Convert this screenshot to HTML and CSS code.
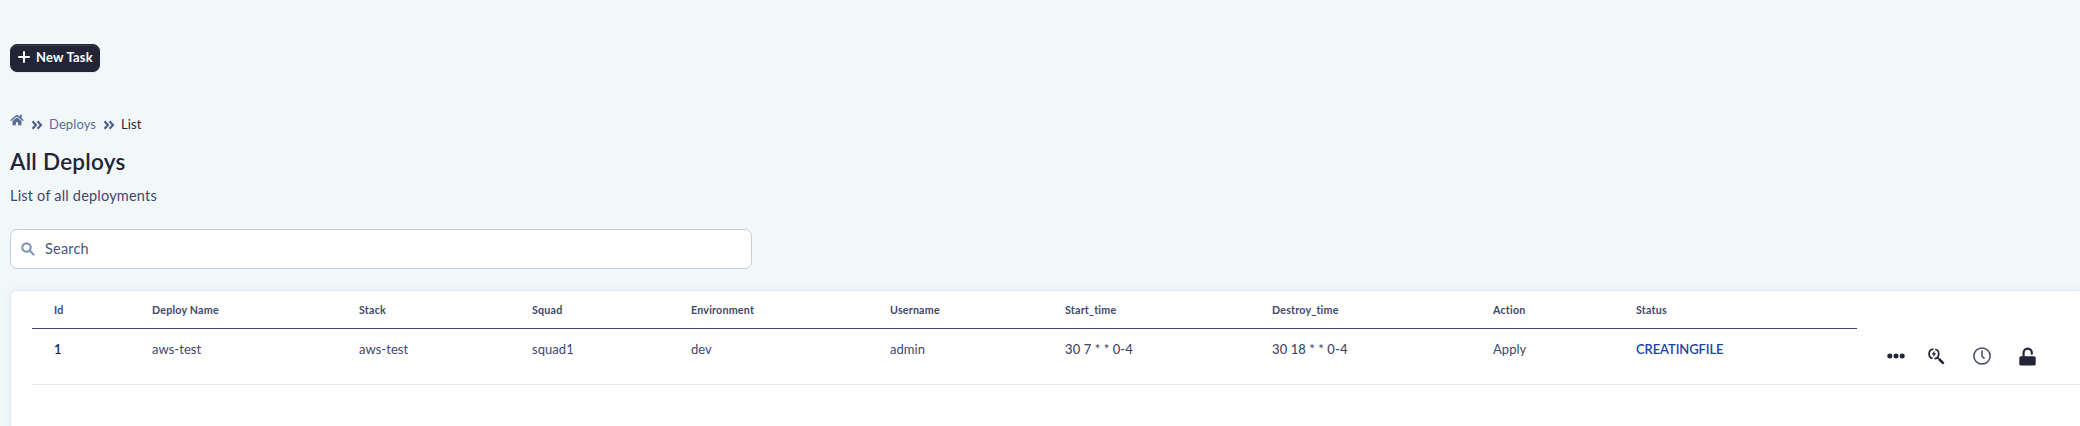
FILE: index.html
```html
<!DOCTYPE html>
<html lang="en">
<head>
<meta charset="utf-8">
<title>All Deploys</title>
<link rel="stylesheet" href="styles.css">
</head>
<body>
<main class="page">
  <button class="btn-new" type="button">
    <svg class="plus" viewBox="0 0 12 12"><path d="M6 1v10M1 6h10"/></svg>
    <span class="btn-label">New Task</span>
  </button>
  <nav class="crumbs">
    <svg class="home" viewBox="0 0 576 512"><path d="M280 148 96 300v164a16 16 0 0 0 16 16h112a16 16 0 0 0 16-16v-96a16 16 0 0 1 16-16h64a16 16 0 0 1 16 16v96a16 16 0 0 0 16 16h112a16 16 0 0 0 16-16V300L296 148a12 12 0 0 0-16 0zM572 251l-84-69V44a12 12 0 0 0-12-12h-56a12 12 0 0 0-12 12v72l-89-74a48 48 0 0 0-61 0L4 251a12 12 0 0 0-2 17l26 31a12 12 0 0 0 17 2l235-194a12 12 0 0 1 15 0l235 194a12 12 0 0 0 17-2l26-31a12 12 0 0 0-1-17z"/></svg>
    <svg class="chev" viewBox="0 0 12 10"><path d="M1.5 1.2 5 5 1.5 8.8M6.5 1.2 10 5 6.5 8.8"/></svg>
    <a class="crumb-link">Deploys</a>
    <svg class="chev" viewBox="0 0 12 10"><path d="M1.5 1.2 5 5 1.5 8.8M6.5 1.2 10 5 6.5 8.8"/></svg>
    <span class="crumb-current">List</span>
  </nav>
  <h1 class="title"><span>All Deploys</span></h1>
  <p class="subtitle"><span>List of all deployments</span></p>
  <div class="search">
    <svg class="lens" viewBox="0 0 14 14"><circle cx="5.5" cy="5.5" r="4.2"/><path d="m8.8 8.8 3.7 3.7"/></svg>
    <span class="search-text">Search</span>
  </div>
  <section class="card">
    <div class="row head">
      <span>Id</span><span>Deploy Name</span><span>Stack</span><span>Squad</span><span>Environment</span><span>Username</span><span>Start_time</span><span>Destroy_time</span><span>Action</span><span>Status</span>
    </div>
    <div class="entry">
      <div class="row data">
        <span class="id">1</span><span>aws-test</span><span>aws-test</span><span>squad1</span><span>dev</span><span>admin</span><span class="cron">30 7 * * 0-4</span><span class="cron">30 18 * * 0-4</span><span>Apply</span><span class="status">CREATINGFILE</span>
      </div>
      <div class="actions">
        <svg class="dots" viewBox="0 0 18 6"><circle cx="2.8" cy="3" r="2.5"/><circle cx="9" cy="3" r="2.5"/><circle cx="15.2" cy="3" r="2.5"/></svg>
        <svg class="inspect" viewBox="0 0 17 17"><path class="ring" d="M5.4 1.1A4.8 4.8 0 0 0 4.6 10.5M7.2 1.3a4.8 4.8 0 0 1-.8 9.4"/><path class="handle" d="m9.5 9.5 1.8 1.8"/><path class="grip" d="m11 11 4.6 4.6"/><path class="bolt" d="M6.8 2.6 3.6 6.4h1.9L5 9.2l3.3-3.9h-2z"/></svg>
        <svg class="clock" viewBox="0 0 18 18"><circle cx="9" cy="9" r="8.1"/><path d="M9 4v5.2l2.1 2.1"/></svg>
        <svg class="lock" viewBox="0 0 17 19"><rect x=".3" y="9.3" width="16.4" height="9.2" rx="1.6"/><path d="M4.6 10V5.8a4.1 4.1 0 0 1 8.2 0v.9"/></svg>
      </div>
    </div>
  </section>
</main>
</body>
</html>
```
FILE: styles.css
```css
* { box-sizing: border-box; }
body { margin: 0; background: #f2f7fa; color: #424769; font-family: Lato, sans-serif; }
.page { height: 426px; padding: 44px 0 0 10px; overflow: hidden; display: flex; flex-direction: column; }
.page > * { flex: none; }
svg { display: block; flex: none; fill: none; }
.btn-new { width: 90px; height: 28px; padding: 0 0 3px 7px; border: 1px solid #232536; border-radius: 7px; background: #232536; box-shadow: inset 0 1px 0 #3e4053, 0 1px 1px rgba(35,37,54,.08); color: #fff; display: flex; align-items: center; gap: 6px; font: 700 13px/24px Lato, sans-serif; letter-spacing: .2px; white-space: nowrap; }
.plus { width: 12px; height: 12px; stroke: #fff; stroke-width: 2; stroke-linecap: round; }
.crumbs { height: 20px; margin-top: 42px; display: flex; align-items: center; font-size: 13px; line-height: 20px; letter-spacing: .1px; color: #232536; }
.home { width: 14px; height: 12px; fill: #5c6c99; margin: -8px 7px 0 0; }
.chev { width: 12px; height: 10px; stroke: #4c5c8c; stroke-width: 2.1; margin-top: 1px; }
.crumb-link { color: #596b99; margin: 0 7px 0 6px; }
.crumb-current { margin-left: 6px; }
.title { margin: 14px 0 0; font-size: 22.5px; line-height: 28px; font-weight: 600; letter-spacing: .25px; color: #232536; }
.subtitle { margin: 9px 0 0; font-size: 14.5px; line-height: 22px; letter-spacing: .2px; }
.search { width: 742px; height: 40px; margin-top: 22px; padding-left: 10px; border: 1px solid #c7cddd; border-radius: 7px; background: #fff; display: flex; align-items: center; gap: 11px; font-size: 14.5px; line-height: 36px; letter-spacing: .2px; color: #465680; }
.search-text { padding-bottom: 1px; }
.lens { width: 14px; height: 14px; margin-right: -1px; stroke: #8497b8; stroke-width: 2.2; stroke-linecap: round; }
.card { height: 150px; margin-top: 21px; padding-left: 21px; border: 1px solid #e4e8f0; border-width: 1px 0 0 1px; border-radius: 7px 0 0 0; background: #fff; box-shadow: 0 0 8px rgba(46,54,80,.05); }
.row { width: 1825px; padding-left: 22px; display: grid; grid-template-columns: 98px 207px 173px 159px 199px 175px 207px 221px 143px 1fr; white-space: nowrap; }
.row > span { justify-self: start; }
.head { height: 38px; border-bottom: 1px solid #424769; font-size: 10.7px; line-height: 37px; font-weight: 700; letter-spacing: .2px; }
.entry { height: 56px; border-bottom: 1px solid #e5e8f1; display: flex; }
.data { height: 40px; flex: none; font-size: 13px; line-height: 40px; letter-spacing: .05px; }
.id { color: #232536; font-weight: 600; }
.cron { font-weight: 500; letter-spacing: .1px; }
.status { color: #1745a8; font-weight: 600; letter-spacing: -.1px; }
.actions { display: flex; align-items: center; padding: 0 0 1px 30px; }
.dots { width: 18px; height: 6px; fill: #232536; }
.inspect { width: 17px; height: 17px; margin-left: 23px; stroke: #232536; }
.ring { stroke-width: 1.7; }
.handle { stroke-width: 1.5; }
.grip { stroke-width: 2.5; }
.bolt { fill: #232536; stroke: none; }
.clock { width: 18px; height: 18px; margin-left: 28px; stroke: #424769; stroke-width: 1.5; stroke-linecap: round; }
.lock { width: 17px; height: 19px; margin-left: 28px; fill: #232536; }
.lock path { fill: none; stroke: #232536; stroke-width: 2.2; stroke-linecap: round; }
```
